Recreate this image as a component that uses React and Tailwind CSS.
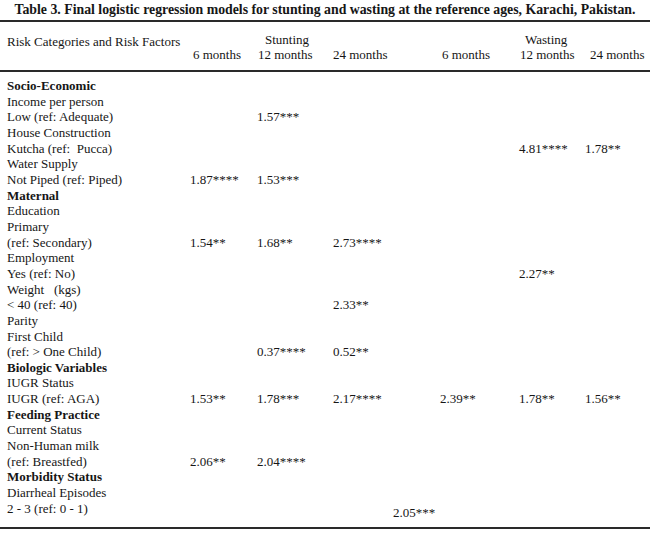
const rows = [
  { label: "Socio-Economic", bold: true },
  { label: "Income per person" },
  { label: "Low (ref: Adequate)", v: { b: "1.57***" } },
  { label: "House Construction" },
  { label: "Kutcha (ref:  Pucca)", v: { e: "4.81****", f: "1.78**" } },
  { label: "Water Supply" },
  { label: "Not Piped (ref: Piped)", v: { a: "1.87****", b: "1.53***" } },
  { label: "Maternal", bold: true },
  { label: "Education" },
  { label: "Primary" },
  { label: "(ref: Secondary)", v: { a: "1.54**", b: "1.68**", c: "2.73****" } },
  { label: "Employment" },
  { label: "Yes (ref: No)", v: { e: "2.27**" } },
  { label: "Weight   (kgs)" },
  { label: "< 40 (ref: 40)", v: { c: "2.33**" } },
  { label: "Parity" },
  { label: "First Child" },
  { label: "(ref: > One Child)", v: { b: "0.37****", c: "0.52**" } },
  { label: "Biologic Variables", bold: true },
  { label: "IUGR Status" },
  { label: "IUGR (ref: AGA)", v: { a: "1.53**", b: "1.78***", c: "2.17****", d: "2.39**", e: "1.78**", f: "1.56**" } },
  { label: "Feeding Practice", bold: true },
  { label: "Current Status" },
  { label: "Non-Human milk" },
  { label: "(ref: Breastfed)", v: { a: "2.06**", b: "2.04****" } },
  { label: "Morbidity Status", bold: true },
  { label: "Diarrheal Episodes" },
  { label: "2 - 3 (ref: 0 - 1)", v: { c2: "2.05***" } },
];

const cols = ["a", "b", "c", "d", "e", "f"];

function Rule() {
  return <div className="h-[2px] w-full bg-[#2a2a2a]" />;
}

export default function App() {
  return (
    <div
      className="w-[650px] h-[540px] bg-white text-[#161616] overflow-hidden"
      style={{ fontFamily: '"Liberation Serif", "Times New Roman", serif' }}
    >
      <h1 className="h-[20px] pt-[2px] text-center text-[13.8px] font-bold leading-[16px]">
        Table 3. Final logistic regression models for stunting and wasting at the reference ages, Karachi, Pakistan.
      </h1>
      <Rule />

      <div className="grid grid-cols-[190px_67px_76px_107px_79px_66px_1fr] h-[48px] pt-[10px] text-[13px] leading-[15px] whitespace-nowrap">
        <div className="pl-[7px] pt-[2px]">Risk Categories and Risk Factors</div>
        <div className="pl-[3px] pt-[15px]">6 months</div>
        <div className="pl-[1px]">
          <div className="pl-[7px]">Stunting</div>
          <div>12 months</div>
        </div>
        <div className="pt-[15px]">24 months</div>
        <div className="pl-[2px] pt-[15px]">6 months</div>
        <div className="pl-[1px]">
          <div className="pl-[5px]">Wasting</div>
          <div>12 months</div>
        </div>
        <div className="pl-[5px] pt-[15px]">24 months</div>
      </div>
      <Rule />

      <div className="pt-[6px] text-[13px] leading-[15.67px]">
        {rows.map((r, i) => (
          <div
            key={i}
            className="grid grid-cols-[190px_67px_76px_107px_79px_66px_1fr] h-[15.67px] whitespace-pre"
          >
            <div className={"pl-[7px] " + (r.bold ? "font-bold" : "")}>{r.label}</div>
            {cols.map((c) => (
              <div key={c}>{r.v && r.v[c]}</div>
            ))}
            {r.v && r.v.c2 && (
              <div className="col-start-4 row-start-1 pl-[60px] pt-[4px]">{r.v.c2}</div>
            )}
          </div>
        ))}
      </div>
      <div className="h-[11px]" />
      <Rule />
    </div>
  );
}
